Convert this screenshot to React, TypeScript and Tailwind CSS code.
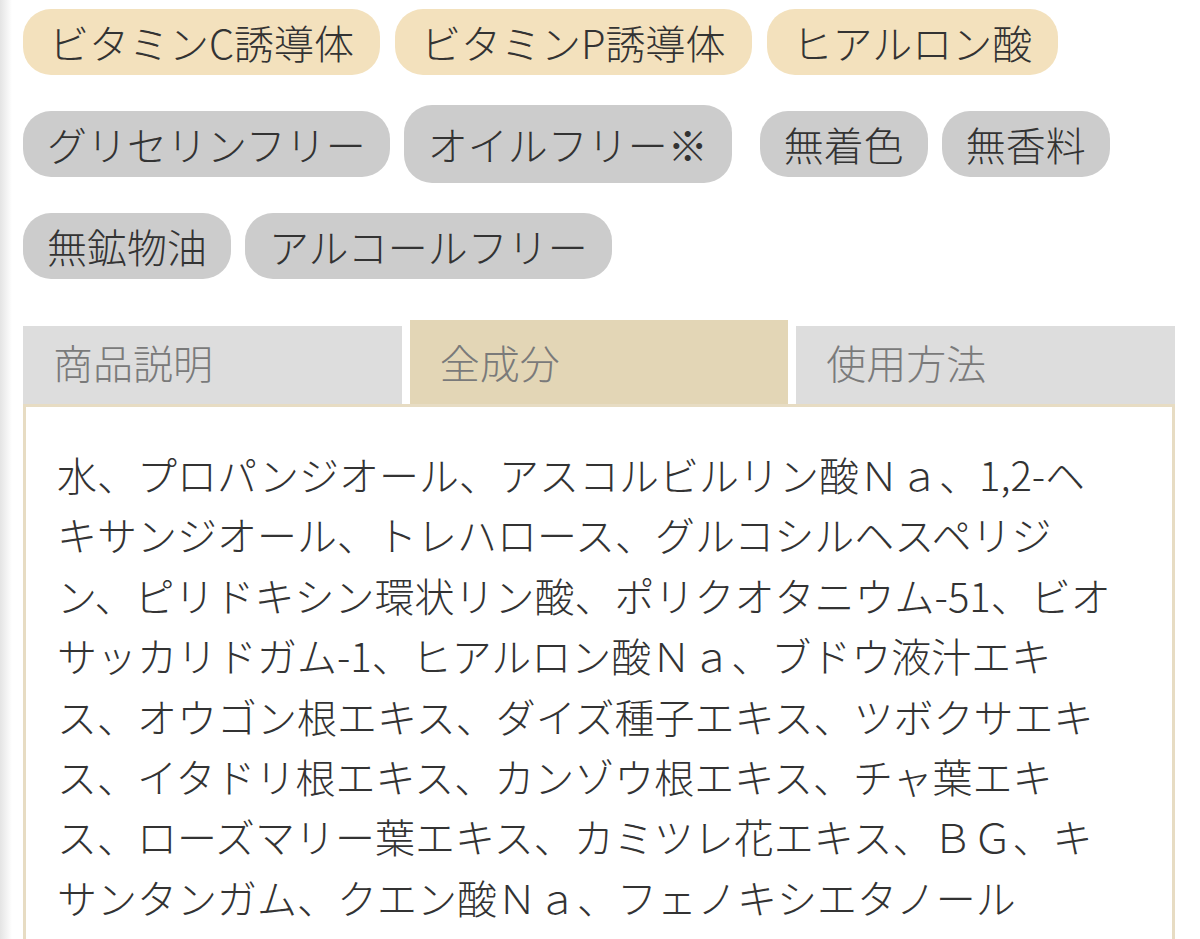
const benefitTags = ["ビタミンC誘導体", "ビタミンP誘導体", "ヒアルロン酸"]

const freeTags = [
  { label: "グリセリンフリー" },
  { label: "オイルフリー※", tall: true },
  { label: "無着色" },
  { label: "無香料" },
  { label: "無鉱物油" },
  { label: "アルコールフリー" },
]

const tabs = ["商品説明", "全成分", "使用方法"]

// wraps as on the product page
const ingredientLines = [
  "水、プロパンジオール、アスコルビルリン酸Ｎａ、1,2-ヘ",
  "キサンジオール、トレハロース、グルコシルヘスペリジ",
  "ン、ピリドキシン環状リン酸、ポリクオタニウム-51、ビオ",
  "サッカリドガム-1、ヒアルロン酸Ｎａ、ブドウ液汁エキ",
  "ス、オウゴン根エキス、ダイズ種子エキス、ツボクサエキ",
  "ス、イタドリ根エキス、カンゾウ根エキス、チャ葉エキ",
  "ス、ローズマリー葉エキス、カミツレ花エキス、ＢＧ、キ",
  "サンタンガム、クエン酸Ｎａ、フェノキシエタノール",
]

export default function App() {
  const active = 1

  return (
    <div
      className="flex h-[939px] overflow-hidden bg-white font-light text-[#333333]"
      style={{ fontFamily: '"Noto Sans CJK JP", "Noto Sans", sans-serif' }}
    >
      <div className="w-3 shrink-0 bg-gradient-to-r from-[#e4e4e4] to-white" />

      <div className="flex-1 pl-[11px] pr-[25px] pt-[9px]">
        {/* Tags */}
        <div className="flex flex-wrap items-center gap-x-[15px] gap-y-[30px]">
          {benefitTags.map((tag) => (
            <span
              key={tag}
              className="flex h-[66px] items-center rounded-[28px] bg-[#f3e1bd] px-[26px] text-[40px] leading-none"
            >
              {tag}
            </span>
          ))}
        </div>

        <div className="mt-[30px] flex w-[1110px] flex-wrap items-center gap-x-[14px] gap-y-[30px]">
          {freeTags.map((tag) => (
            <span
              key={tag.label}
              className={`flex items-center rounded-[28px] bg-[#cccccc] px-6 text-[40px] leading-none ${
                tag.tall ? "mr-[14px] h-[78px]" : "h-[66px]"
              }`}
            >
              {tag.label}
            </span>
          ))}
        </div>

        {/* Tabs */}
        <div className="mt-[41px] flex items-end gap-2">
          {tabs.map((tab, i) => (
            <div
              key={tab}
              className={`flex flex-1 items-end pb-[22px] pl-[30px] text-[40px] leading-none text-[#7a7a7a] ${
                i === active ? "h-[84px] bg-[#e3d6b6]" : "h-[78px] bg-[#dddddd]"
              }`}
            >
              {tab}
            </div>
          ))}
        </div>

        <div className="border-[3px] border-[#e7dcc3] pb-20 pl-[31px] pr-6 pt-[37px]">
          <p className="text-[40px] leading-[60.4px] text-[#333333]">
            {ingredientLines.map((line, i) => (
              <span key={i} className="block whitespace-nowrap">
                {line}
              </span>
            ))}
          </p>
        </div>
      </div>
    </div>
  )
}
